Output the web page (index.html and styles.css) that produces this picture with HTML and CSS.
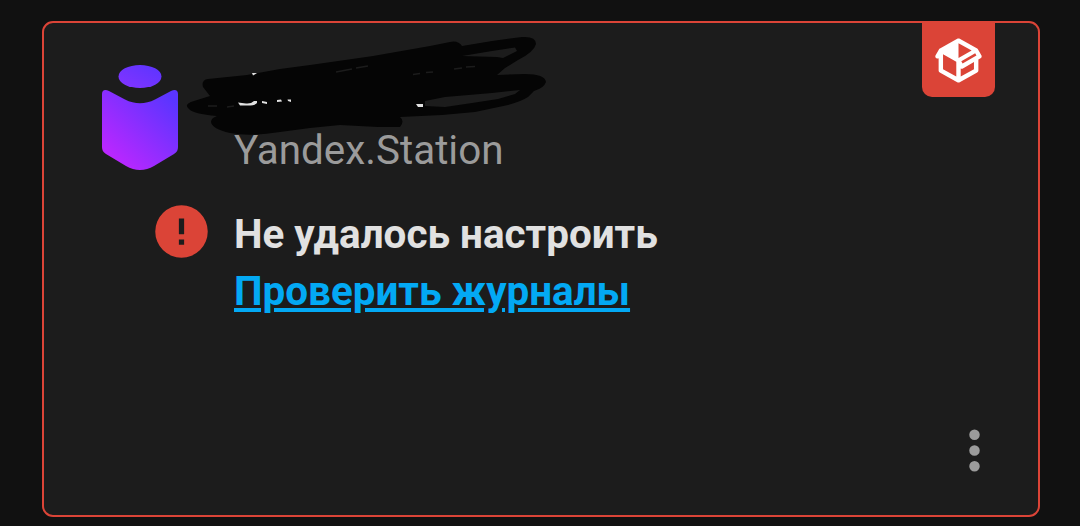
FILE: index.html
```
<!DOCTYPE html>
<html lang="ru">
<head>
<meta charset="UTF-8" />
<meta name="viewport" content="width=device-width, initial-scale=1" />
<title>Yandex.Station</title>
<link rel="stylesheet" href="styles.css">
</head>
<body>

  <main class="card">

    <!-- custom integration badge -->
    <div class="badge">
      <svg viewBox="0 0 24 24"><path d="M2,10.96C1.5,10.68 1.35,10.07 1.63,9.59L3.13,7C3.24,6.8 3.41,6.66 3.6,6.58L11.43,2.18C11.59,2.06 11.79,2 12,2C12.21,2 12.41,2.06 12.57,2.18L20.47,6.62C20.66,6.72 20.82,6.88 20.91,7.08L22.36,9.6C22.64,10.08 22.47,10.69 22,10.96L21,11.54V16.5C21,16.88 20.79,17.21 20.47,17.38L12.57,21.82C12.41,21.94 12.21,22 12,22C11.79,22 11.59,21.94 11.43,21.82L3.53,17.38C3.21,17.21 3,16.88 3,16.5V10.96C2.7,11.13 2.32,11.14 2,10.96M12,4.15V10.85L17.96,7.5L12,4.15M5,15.91L11,19.29V12.58L5,9.21V15.91M19,15.91V12.69L14,15.59C13.67,15.77 13.3,15.76 13,15.6V19.29L19,15.91M13.85,13.36L20.13,9.73L19.55,8.72L13.27,12.35L13.85,13.36Z" /></svg>
    </div>

    <header>
      <svg class="logo" viewBox="0 0 76 106">
        <defs>
          <linearGradient id="violet" gradientUnits="userSpaceOnUse" x1="8" y1="98" x2="70" y2="34">
            <stop offset="0" stop-color="#c026ff" />
            <stop offset="1" stop-color="#5a35ff" />
          </linearGradient>
          <linearGradient id="cap" x1="0" y1="1" x2="1" y2="0">
            <stop offset="0" stop-color="#8433ff" />
            <stop offset="1" stop-color="#5a35ff" />
          </linearGradient>
        </defs>
        <ellipse cx="38" cy="11.5" rx="21.5" ry="11.5" fill="url(#cap)" />
        <path fill="url(#violet)" d="M0,29C0,25 3,24 7,26L23,34.500C33,39.500 43,39.500 53,34.500L69,26C73,24 76,25 76,29V82C76,85 75,87 72,89L52,101C43,106.300 33,106.300 24,101L4,89C1,87 0,85 0,82Z" />
      </svg>
      <div class="domain">Yandex.Station</div>
    </header>

    <section class="message">
      <svg class="alert" viewBox="0 0 24 24"><path d="M13,13H11V7H13M13,17H11V15H13M12,2A10,10 0 0,0 2,12A10,10 0 0,0 12,22A10,10 0 0,0 22,12A10,10 0 0,0 12,2Z" /></svg>
      <div class="text">
        <p>Не удалось настроить</p>
        <a href="#">Проверить журналы</a>
      </div>
    </section>

    <footer>
      <svg class="menu" viewBox="0 0 24 24"><path d="M12,16A2,2 0 0,1 14,18A2,2 0 0,1 12,20A2,2 0 0,1 10,18A2,2 0 0,1 12,16M12,10A2,2 0 0,1 14,12A2,2 0 0,1 12,14A2,2 0 0,1 10,12A2,2 0 0,1 12,10M12,4A2,2 0 0,1 14,6A2,2 0 0,1 12,8A2,2 0 0,1 10,6A2,2 0 0,1 12,4Z" /></svg>
    </footer>

    <!-- scribble over the device name -->
    <svg class="scribble" viewBox="186 36 362 102">
      <path class="ink" fill-rule="evenodd" d="M203,87Q201,80 208,79L247,75L280,69L310,65L373,56L430,46L450,42Q458,40 462,46L492,41L522,37Q536,36 536,44Q534,52 518,60L505,68L497,75L525,74Q545,74 546,82Q544,88 534,91L528,97Q522,101 508,105L475,112L442,115L400,117Q405,121 400,127L378,127L340,125L310,128L280,132Q250,137 230,133Q212,129 211,122Q211,118 217,116Q193,114 189,109Q183,104 194,101L210,96ZM462,56L492,51L515,47.500L517,51L503,58L497,57ZM425,101L445,97L492,93L520,90L515,94L498,99L472,103L445,107L425,106Z" />
      <path class="name" d="M238,102.500L246,103.500Q251,104 254,101L257,101V103Q255,105.500 248,105.500H240ZM262,101L267,102V104L262,103ZM277,100L281,99.500L282,101.500L277,102ZM287.500,99.500H291V102L288,101ZM252,73L257,73L253,75.500ZM416,104L423,104V107L418,107Z" />
      <path class="gap" d="M336,72L352,69M356,68L368,66M413,74.500L420,73.500M426,72.500L433,72M454,69L462,68M466,67L475,66.500M208,106L217,106M227,107L234,106" />
    </svg>

  </main>

</body>
</html>
```
FILE: styles.css
```
* {
  margin: 0; padding: 0; box-sizing: border-box;
}

body {
  font-family: Roboto, "Noto Sans", sans-serif;
  font-size: 40.4px;
  line-height: 57px;
  background: #111;
  color: #e1e1e1;
  height: 526px;
  padding: 21px 40px 9px 42px;
  overflow: hidden;
}

svg {
  display: block;
}

.card {
  position: relative;
  height: 496px;
  display: flex;
  flex-direction: column;
  background: #1c1c1c;
  border: 2px solid #db4437;
  border-radius: 11px;
}

/* badge hangs from the top border */
.badge {
  position: absolute;
  top: -1px;
  right: 43px;
  width: 73px;
  height: 75px;
  padding: 12px 10px 10px;
  background: #db4437;
  border-radius: 0 0 10px 10px;
}

.badge svg {
  width: 53px;
  height: 53px;
  fill: #fff;
}

header {
  display: flex;
  align-items: flex-end;
  gap: 56px;
  padding: 42px 0 0 58px;
}

.logo {
  width: 76px;
  height: 106px;
}

.domain {
  color: #9b9b9b;
  margin-bottom: -8px;
}

.message {
  display: flex;
  gap: 21px;
  padding: 29px 0 0 106px;
}

.alert {
  width: 63px;
  height: 63px;
  fill: #db4437;
}

.text {
  font-weight: bold;
  padding-top: 6px;
}

.text a {
  color: #03a9f4;
}

footer {
  display: flex;
  justify-content: flex-end;
  margin-top: auto;
  padding: 0 32px 33px 0;
}

.menu {
  width: 63px;
  height: 63px;
  fill: #9b9b9b;
}

.scribble {
  position: absolute;
  left: 142px;
  top: 13px;
  width: 362px;
  height: 102px;
}

.ink {
  fill: #050505;
}

.name {
  fill: #e1e1e1;
}

.gap {
  stroke: #1c1c1c;
  stroke-width: 1.5;
}
```
